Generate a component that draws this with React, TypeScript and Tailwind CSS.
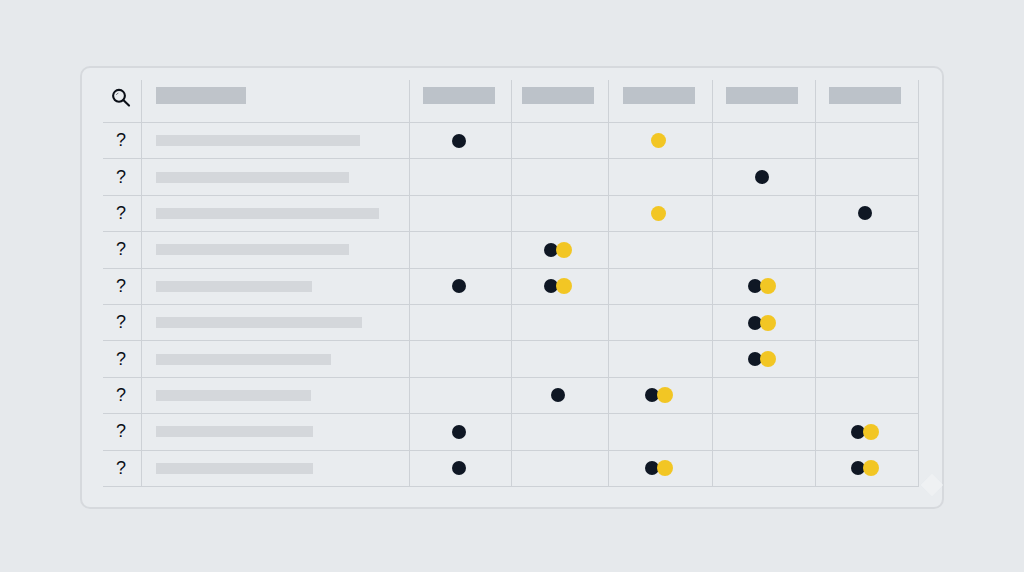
import React from "react";

type Dot = "" | "b" | "y" | "p";

const rows: { w: number; cells: Dot[] }[] = [
  { w: 204, cells: ["b", "", "y", "", ""] },
  { w: 193, cells: ["", "", "", "b", ""] },
  { w: 223, cells: ["", "", "y", "", "b"] },
  { w: 193, cells: ["", "p", "", "", ""] },
  { w: 156, cells: ["b", "p", "", "p", ""] },
  { w: 206, cells: ["", "", "", "p", ""] },
  { w: 175, cells: ["", "", "", "p", ""] },
  { w: 155, cells: ["", "b", "p", "", ""] },
  { w: 157, cells: ["b", "", "", "", "p"] },
  { w: 157, cells: ["b", "", "p", "", "p"] },
];

function Mark({ t }: { t: Dot }) {
  if (t === "b") return <span className="block w-[14px] h-[14px] rounded-full bg-[#0f1724]" />;
  if (t === "y") return <span className="block w-[15px] h-[15px] rounded-full bg-[#f2c624]" />;
  if (t === "p")
    return (
      <span className="flex items-center">
        <span className="block w-[14px] h-[14px] rounded-full bg-[#0f1724]" />
        <span className="block w-[16px] h-[16px] rounded-full bg-[#f2c624] -ml-[2px]" />
      </span>
    );
  return null;
}

const dataCell = "flex items-center justify-center border-b border-l border-[#cdd1d6] pr-[4px]";

export default function App() {
  return (
    <div
      className="w-[1024px] h-[572px] bg-[#e6e9ec] pt-[66px] pl-[80px]"
      style={{ fontFamily: '"Liberation Sans", Arial, sans-serif' }}
    >
      <div className="relative w-[864px] h-[443px] rounded-[10px] border-2 border-[#d6d9dd] bg-[#e9ecef] pt-[12px] pl-[21px]">
        <div className="grid grid-cols-[38px_268px_102px_97px_104px_103px_104px] w-[816px]">
          {/* header */}
          <div className="h-[43px] flex items-center justify-center border-b border-[#cdd1d6] pb-[7px] pr-[2px]">
            <svg width="20" height="20" viewBox="0 0 20 20" fill="none" stroke="#0b0f17" strokeWidth="2.1" strokeLinecap="round">
              <circle cx="8" cy="7.8" r="5.9" />
              <path d="M12.3 12.1 L18 17.6" />
              <path d="M5.4 6.6 A2.6 2.6 0 0 1 7 5.2" strokeWidth="1" opacity="0.5" />
            </svg>
          </div>
          <div className="h-[43px] flex items-center border-b border-l border-[#cdd1d6] pl-[14px] pb-[12px]">
            <span className="block w-[90px] h-[17px] bg-[#bfc4ca]" />
          </div>
          {[0, 1, 2, 3, 4].map((i) => (
            <div key={i} className={`h-[43px] ${dataCell} pb-[12px] ${i === 4 ? "border-r" : ""}`}>
              <span className="block w-[72px] h-[17px] bg-[#bcc2c9]" />
            </div>
          ))}
          {rows.map((r, ri) => (
            <React.Fragment key={ri}>
              <div className="h-[36.4px] flex items-center justify-center border-b border-[#cdd1d6] text-[18px] text-[#0b0f17] pr-[2px]">
                ?
              </div>
              <div className="h-[36.4px] flex items-center border-b border-l border-[#cdd1d6] pl-[14px]">
                <span className="block h-[11px] bg-[#d4d7db]" style={{ width: r.w }} />
              </div>
              {r.cells.map((c, ci) => (
                <div key={ci} className={`h-[36.4px] ${dataCell} ${ci === 4 ? "border-r" : ""}`}>
                  <Mark t={c} />
                </div>
              ))}
            </React.Fragment>
          ))}
        </div>
        <span className="absolute right-[2px] bottom-[14px] w-[16px] h-[16px] rotate-45 bg-[#f1f3f5] opacity-70" />
      </div>
    </div>
  );
}
